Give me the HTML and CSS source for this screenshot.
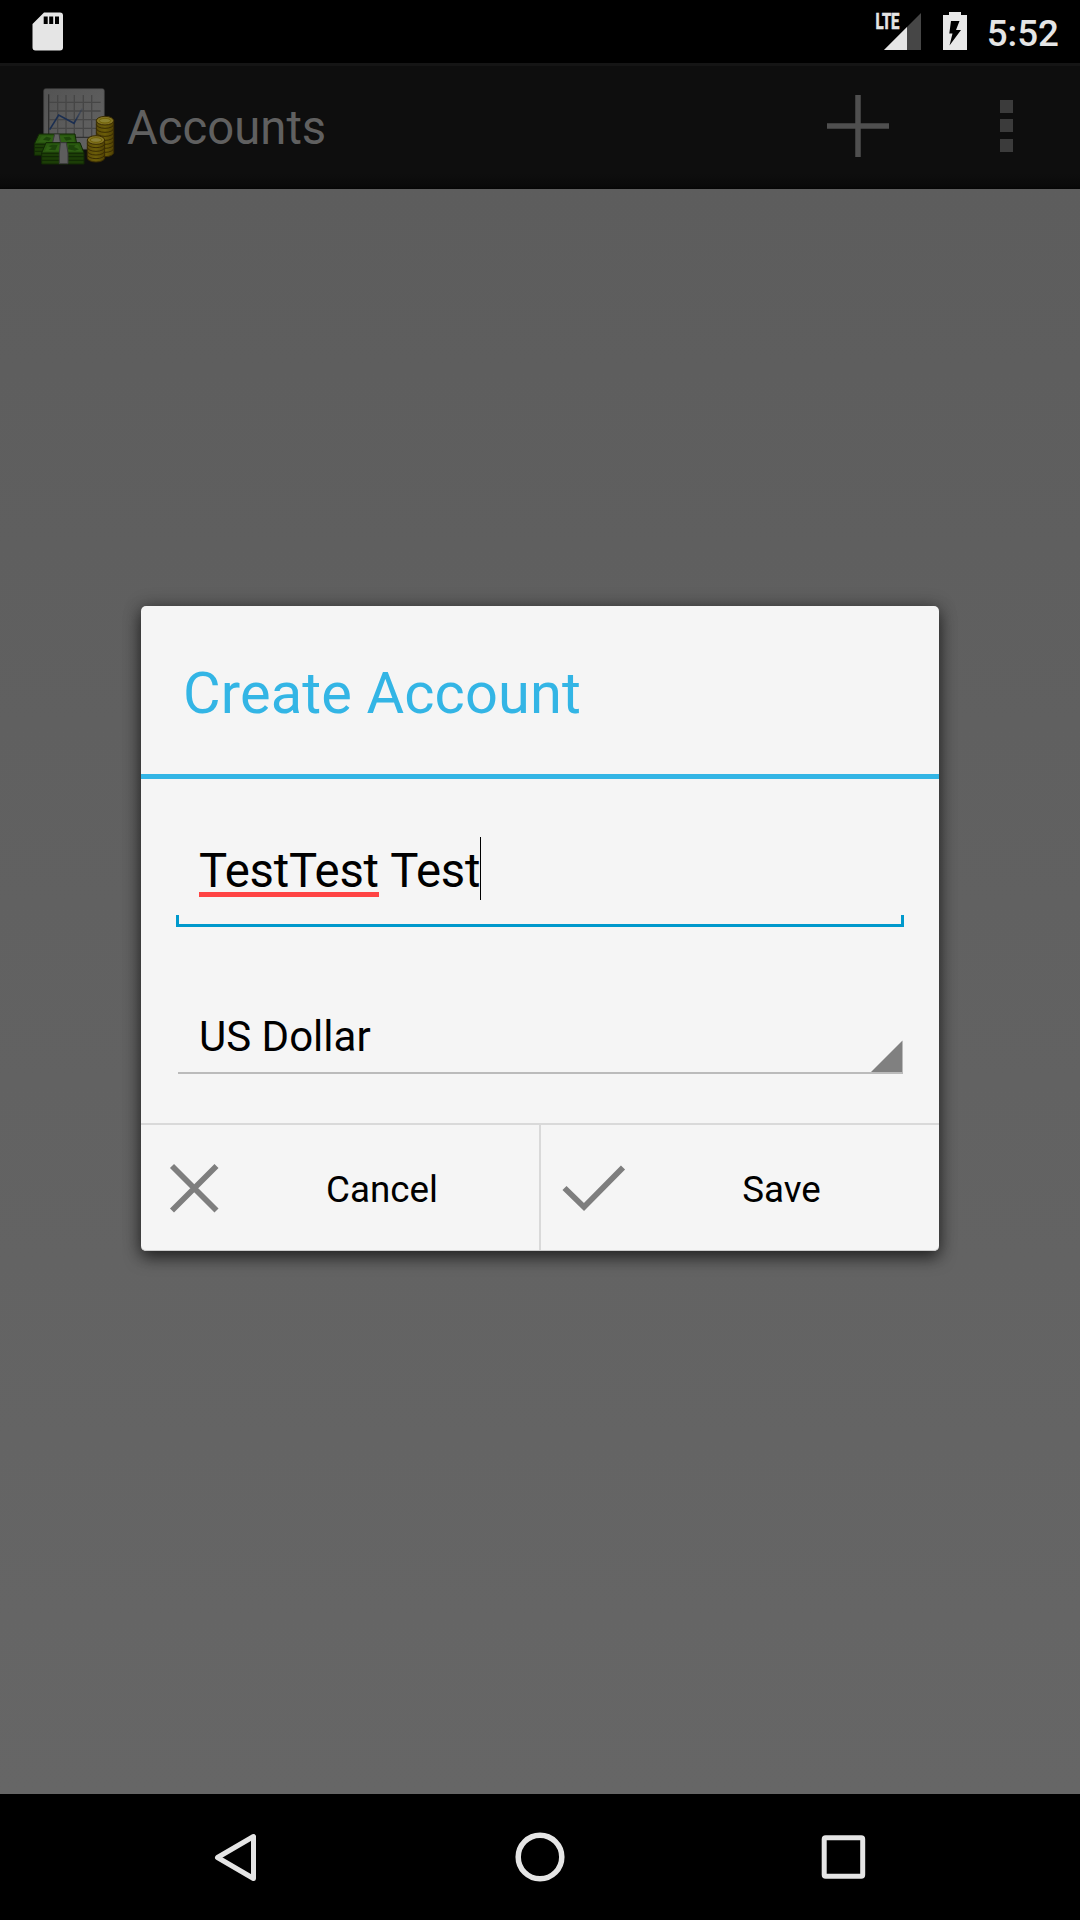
FILE: index.html
```html
<!DOCTYPE html>
<html lang="en">
<head>
<meta charset="utf-8">
<title>Accounts</title>
<link rel="stylesheet" href="styles.css">
</head>
<body>
<div class="screen">
  <header class="status-bar">
    <svg class="sd-icon" width="32" height="39" viewBox="0 0 32 39">
      <path fill="#e5e5e5" d="M12 .5H28a3 3 0 0 1 3 3V35.500a3 3 0 0 1-3 3H3.500a3 3 0 0 1-3-3V12Z"/>
      <path fill="#000" d="M11.700 4.500h4v7.500h-4zM17.200 4.500h4v7.500h-4zM23 4.500h4v7.500h-4z"/>
    </svg>
    <div class="status-right">
      <svg class="signal" width="48" height="40" viewBox="0 0 48 40">
        <path fill="#464646" d="M46 1V38H9Z"/>
        <path fill="#e5e5e5" d="M32 15V38H9Z"/>
        <text class="lte" x="0.500" y="17.200" textLength="24" lengthAdjust="spacingAndGlyphs">LTE</text>
      </svg>
      <svg class="battery" width="24" height="38" viewBox="0 0 24 38">
        <path fill="#e8e8e8" d="M0 3H6V0H18V3H24V38H0Z"/>
        <path fill="#000" d="M8 9H16.500L13 18H18L6.500 33.500L9.500 21.500H6.300Z"/>
      </svg>
      <span class="clock">5:52</span>
    </div>
  </header>

  <nav class="action-bar">
    <svg class="app-icon" width="100" height="100" viewBox="0 0 300 300">
      <defs>
        <linearGradient id="paper" x1="0" y1="0" x2="1" y2="1">
          <stop offset="0" stop-color="#535353"/><stop offset="1" stop-color="#646464"/>
        </linearGradient>
        <linearGradient id="gold" x1="0" x2="1">
          <stop offset="0" stop-color="#5c4c07"/><stop offset=".5" stop-color="#6c5e09"/><stop offset="1" stop-color="#514204"/>
        </linearGradient>
        <linearGradient id="trend" gradientUnits="userSpaceOnUse" x1="90" y1="0" x2="188" y2="0">
          <stop offset="0" stop-color="#1b2e50"/><stop offset=".75" stop-color="#1b2e50"/><stop offset="1" stop-color="#1b2e50" stop-opacity="0.150"/>
        </linearGradient>
      </defs>
      <rect x="71" y="41" width="182" height="182" rx="6" fill="url(#paper)" stroke="#3e3e3e" stroke-width="2"/>
      <path fill="none" stroke="#464646" stroke-width="4" d="M113 60V186M138 60V186M163 60V186M190 60V186M215 60V186M88 82H242M88 108H242M88 134H242M88 160H242"/>
      <path fill="none" stroke="#303030" stroke-width="4" d="M86 58V187H232"/>
      <path fill="none" stroke="url(#trend)" stroke-width="5" d="M89 164L116 120L162 145L187 101"/>

      <g stroke="#392c03" stroke-width="3" fill="url(#gold)">
        <path d="M229 136V233A26 12 0 0 0 281 233V136Z"/>
        <path fill="none" d="M229 148a26 12 0 0 0 52 0M229 160a26 12 0 0 0 52 0M229 172a26 12 0 0 0 52 0M229 184a26 12 0 0 0 52 0M229 196a26 12 0 0 0 52 0M229 208a26 12 0 0 0 52 0M229 220a26 12 0 0 0 52 0"/>
        <ellipse cx="255" cy="137" rx="26" ry="13" fill="#827323"/>
        <ellipse cx="255" cy="137" rx="17" ry="7" fill="#8a812f" stroke="#716207"/>
        <path d="M202 195V249A26 12 0 0 0 254 249V195Z"/>
        <path fill="none" d="M202 206a26 12 0 0 0 52 0M202 217a26 12 0 0 0 52 0M202 228a26 12 0 0 0 52 0M202 239a26 12 0 0 0 52 0"/>
        <ellipse cx="228" cy="195" rx="26" ry="13" fill="#827323"/>
        <ellipse cx="228" cy="195" rx="17" ry="7" fill="#8a8039" stroke="#716207"/>
      </g>

      <g stroke="#102704" stroke-width="3">
        <path fill="#1c3d07" d="M43 207H160V241H43Z"/>
        <path fill="none" d="M43 218H90M43 229H90"/>
        <path fill="#29570f" d="M57 177H165L170 207H43Z"/>
        <path fill="#2f5f14" stroke="none" d="M65 183H160L163 201H54Z"/>
        <path fill="#1d440b" stroke="none" d="M79 185l14 4-6 9-18-4zM131 187l17-2 8 8-18 4z"/>
        <path fill="#606060" stroke="#393939" d="M104 177H117L122 207H97Z"/>
        <path fill="#1c3d07" d="M65 234H192V267H65Z"/>
        <path fill="none" d="M65 245H192M65 256H192"/>
        <path fill="#29570f" d="M78 203H180L192 234H65Z"/>
        <path fill="#2f5f14" stroke="none" d="M84 209H174L183 228H75Z"/>
        <path fill="#1d440b" stroke="none" d="M84 213l13-4 16 1-7 16-20-2 10-6zM146 210l21 1-5 5 15 7-12 4-21-4z"/>
        <path fill="#5d5d5d" stroke="#393939" d="M121 203H139L144 234V266H118V234Z"/>
      </g>
    </svg>
    <h1 class="page-title">Accounts</h1>
    <div class="actions">
      <svg width="64" height="64" viewBox="0 0 64 64">
        <path stroke="#4f4f4f" stroke-width="5.500" d="M1 32H63M32 1V63"/>
      </svg>
      <svg width="13" height="52" viewBox="0 0 13 52">
        <path fill="#3b3b3b" d="M0 0H13V13H0ZM0 19H13V32H0ZM0 39H13V52H0Z"/>
      </svg>
    </div>
  </nav>

  <main class="content">
    <section class="dialog">
      <h2 class="dialog-title">Create Account</h2>
      <div class="dialog-body">
        <div class="name-field"><span class="misspelled">TestTest</span><span class="typed">&nbsp;Test</span><i class="caret"></i></div>
        <div class="currency">
          <span>US Dollar</span>
          <svg class="spinner" width="32" height="32" viewBox="0 0 32 32"><path fill="#808080" d="M31.500 .5V32H0Z"/></svg>
        </div>
      </div>
      <div class="buttons">
        <div class="button">
          <svg width="52" height="52" viewBox="0 0 52 52"><path fill="none" stroke="#7e7e7e" stroke-width="5.700" d="M4 4L48.500 48.500M48.500 4L4 48.500"/></svg>
          <span>Cancel</span>
        </div>
        <div class="button save">
          <svg width="64" height="52" viewBox="0 0 64 52"><path fill="none" stroke="#7e7e7e" stroke-width="5.800" d="M2.500 26L22 45L61 5.500"/></svg>
          <span>Save</span>
        </div>
      </div>
    </section>
  </main>

  <footer class="nav-bar">
    <svg width="50" height="52" viewBox="0 0 50 52"><path fill="none" stroke="#e5e5e5" stroke-width="5" stroke-linejoin="round" d="M42.500 4.500V46.500L6.500 25.500Z"/></svg>
    <svg width="50" height="52" viewBox="0 0 50 52"><circle cx="25" cy="25" r="21.800" fill="none" stroke="#e5e5e5" stroke-width="5.500"/></svg>
    <svg width="50" height="52" viewBox="0 0 50 52"><rect x="5.200" y="5.700" width="38.500" height="38.500" rx="1.500" fill="none" stroke="#e5e5e5" stroke-width="5"/></svg>
  </footer>
</div>
</body>
</html>
```
FILE: styles.css
```css
* { box-sizing: border-box; }

body {
  margin: 0;
  background: #000;
  font-family: Roboto, sans-serif;
}

svg { display: block; flex: none; }

.screen {
  width: 1080px;
  height: 1920px;
  display: grid;
  grid-template-rows: 63px 126px 1605px 126px;
}

/* Status bar */
.status-bar {
  display: flex;
  justify-content: space-between;
  padding: 12px 21px 0 32px;
  color: #e5e5e5;
}

.status-right { display: flex; align-items: flex-start; }
.signal { overflow: visible; }
.battery { margin-left: 20px; }

.lte {
  font-size: 22px;
  font-weight: 700;
  fill: #e5e5e5;
  stroke: #e5e5e5;
  stroke-width: .7px;
}

.clock {
  margin-left: 20px;
  font-size: 36.75px;
  font-weight: 500;
  line-height: 43px;
}

/* Action bar */
.action-bar {
  display: flex;
  align-items: center;
  padding: 0 67px 0 20px;
  border-top: 3px solid #151515;
  background: linear-gradient(#0e0e0e 0 108px, #0a0a0a 120px, #060606);
}

.app-icon { margin-top: -5px; }

.page-title {
  margin: 1px 0 0 7px;
  font-size: 47.25px;
  font-weight: 400;
  line-height: 56px;
  color: #606060;
}

.actions {
  display: flex;
  align-items: center;
  gap: 110px;
  margin: -3px 0 0 auto;
}

/* Dimmed content behind the dialog */
.content {
  padding: 417px 141px 0;
  background: linear-gradient(#5d5d5d, #666);
}

.dialog {
  height: 645px;
  display: grid;
  grid-template-rows: 173px 344px 128px;
  border-radius: 5px;
  background: #f5f5f5;
  box-shadow: 0 7px 16px rgba(0, 0, 0, .55), 0 0 18px rgba(0, 0, 0, .3);
}

.dialog-title {
  margin: 0;
  padding: 53px 42px 0;
  border-bottom: 5px solid #33b5e5;
  font-size: 57.75px;
  font-weight: 400;
  line-height: 68px;
  letter-spacing: .13px;
  color: #33b5e5;
}

.dialog-body { padding: 58px 35px 0; }

.name-field {
  display: flex;
  height: 90px;
  padding: 0 20px;
  border: solid #0099cc;
  border-width: 0 3px 3px;
  border-image: linear-gradient(transparent 78px, #0099cc 78px) 0 3 3;
  font-size: 47.25px;
  line-height: 68px;
  letter-spacing: -.23px;
}

.misspelled {
  height: 60px;
  border-bottom: 5px solid #ff4444;
}

.caret {
  width: 1px;
  height: 63px;
  background: #000;
}

.currency {
  display: flex;
  justify-content: space-between;
  height: 63px;
  margin: 84px 1px 0 2px;
  padding-left: 21px;
  border-bottom: 2px solid #bbb;
  font-size: 42px;
  line-height: 51px;
}

.spinner { align-self: flex-end; }

.buttons {
  display: grid;
  grid-template-columns: 398px 400px;
  border-top: 2px solid #d9d9d9;
  border-bottom: 1px solid #ccc;
  border-radius: 0 0 5px 5px;
  font-size: 36.75px;
}

.button {
  display: flex;
  align-items: center;
  padding-left: 27px;
}

.button span {
  flex: 1;
  padding-top: 3px;
  text-align: center;
}

.button:not(.save) span { padding-left: 5px; }

.save {
  padding-left: 21px;
  border-left: 2px solid #d9d9d9;
}

.save span { padding-right: 2px; }

/* System navigation */
.nav-bar {
  display: flex;
  justify-content: center;
  gap: 254px;
  padding-top: 38px;
}
```
